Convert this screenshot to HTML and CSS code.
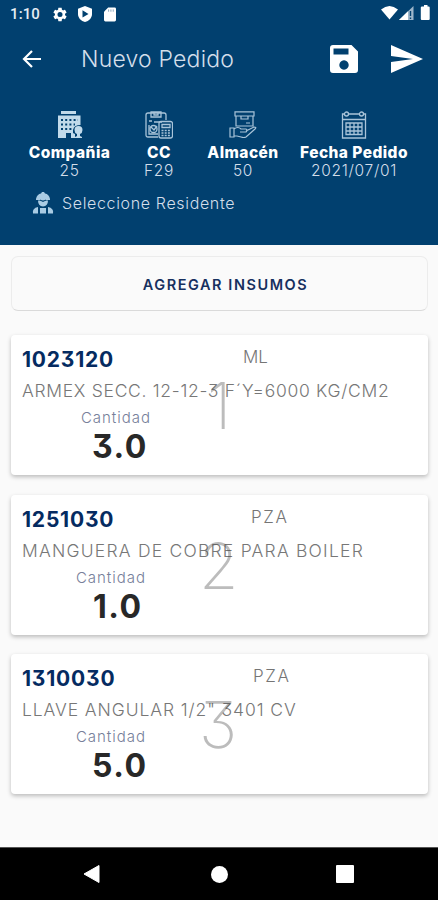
FILE: index.html
```html
<!DOCTYPE html>
<html lang="es">
<head>
<meta charset="utf-8">
<title>Nuevo Pedido</title>
<link rel="stylesheet" href="styles.css">
</head>
<body>
<header class="header">
  <div class="status">
    <span class="clock">1:10</span>
    <svg class="st-gear" width="14" height="15" viewBox="2 2 20 20" fill="#fff"><path d="M19.14 12.94c.04-.3.06-.61.06-.94s-.02-.64-.07-.94l2.03-1.58c.18-.14.23-.41.12-.61l-1.92-3.32c-.12-.22-.37-.29-.59-.22l-2.39.96c-.5-.38-1.03-.7-1.62-.94l-.36-2.54c-.04-.24-.24-.41-.48-.41h-3.84c-.24 0-.43.17-.47.41l-.36 2.54c-.59.24-1.13.57-1.62.94l-2.39-.96c-.22-.08-.47 0-.59.22L2.74 8.87c-.12.21-.08.47.12.61l2.03 1.58c-.05.3-.09.63-.09.94s.02.64.07.94l-2.03 1.58c-.18.14-.23.41-.12.61l1.92 3.32c.12.22.37.29.59.22l2.39-.96c.5.38 1.03.7 1.62.94l.36 2.54c.05.24.24.41.48.41h3.84c.24 0 .44-.17.47-.41l.36-2.54c.59-.24 1.13-.56 1.62-.94l2.39.96c.22.08.47 0 .59-.22l1.92-3.32c.12-.22.07-.47-.12-.61l-2.01-1.58zM12 15.6a3.6 3.6 0 1 1 0-7.2 3.6 3.6 0 0 1 0 7.2z"/></svg>
    <svg class="st-shield" width="14" height="16" viewBox="0 0 14 16"><path fill="#fff" d="M7 0l7 2.800V8c0 4-3 7-7 8-4-1-7-4-7-8V2.800z"/><path fill="#01406f" d="M4.500 4.300l6 3.600-6 3.600z"/></svg>
    <svg class="st-sd" width="12" height="15" viewBox="0 0 13 15"><path fill="#fff" d="M4.500 0H11.500Q13 0 13 1.500V13.500Q13 15 11.500 15H1.500Q0 15 0 13.500V4.500z"/><path stroke="#01406f" d="M5 2v2.500M7.500 2v2.500M10 2v2.500" stroke-width=".5"/></svg>
    <svg class="st-right" width="52" height="18" viewBox="0 0 52 18"><path fill="#fff" d="M2 4.500Q10.500-2.500 19 4.500L10.500 14.500z"/><path fill="#9db6cb" d="M34.500 1v14H20z"/><path fill="#fff" d="M29 6.300V15H20z"/><path d="M31.500 6v5M31.500 12.500v1.500" stroke="#01406f" stroke-width="1.400"/><path fill="#fff" d="M43.500 1.500h1.500V0h3.500v1.500h1.200q1 0 1 1V14q0 1-1 1h-6.900q-1 0-1-1V2.500q0-1 1.200-1z"/></svg>
  </div>
  <div class="bar">
    <svg class="back" width="20" height="18" viewBox="0 0 20 18" fill="none" stroke="#fff" stroke-width="2.200"><path d="M19 9H2M10 1L2 9l8 8"/></svg>
    <h1 class="title">Nuevo Pedido</h1>
    <svg class="save" width="28" height="28" viewBox="0 0 28 28"><path fill="#fff" fill-rule="evenodd" d="M3 0H21.500L28 6.500V25Q28 28 25 28H3Q0 28 0 25V3Q0 0 3 0zM3.500 3.500V9.500H18.500V3.500zM14 15.300a4.700 4.700 0 1 0 .01 0z"/></svg>
    <svg class="send" width="32" height="28" viewBox="0 0 32 28"><path fill="#fff" d="M0 0L32 14 0 28V17L22 14 0 11z"/></svg>
  </div>
  <div class="facts">
    <div class="fact company">
      <svg width="28" height="28" viewBox="0 0 28 28"><g fill="#c1daea"><path d="M5 0H20V3H5zM2 4.500H24.500V14Q18 14 17 19v3l2 1v4H15V22H10V27H2z"/><path d="M22.500 15q4 0 4 4 0 3-2.500 4v2l2 1v1h-7v-1l2-1v-2q-2.500-1-2.500-4 0-4 4-4z"/></g><path stroke="#01406f" stroke-width="2" stroke-dasharray="2 2.200" d="M5 9h17M5 13.500h14M5 18h11"/></svg>
      <b>Compañia</b><span>25</span>
    </div>
    <div class="fact cc">
      <svg width="28" height="28" viewBox="0 0 28 28" fill="none" stroke="#a9c4d9" stroke-width="1.300"><path d="M13 26H3Q1 26 1 24V4Q1 2 3 2H19Q21 2 21 4V9M6 1V6H16V1zM9 1v3h4V1M4 10h3M9 11h8M4 14v9h9"/><circle cx="8.500" cy="18" r="3.500"/><path d="M6 16l3 3 3-4"/><rect x="14" y="10.500" width="13.500" height="16.500" rx="2"/><path d="M17 13.500h8v3h-8z"/><path d="M16.500 19.500h9M16.500 22h9M16.500 24.500h9" stroke-dasharray="2 1.200" stroke-width="1.600"/></svg>
      <b>CC</b><span>F29</span>
    </div>
    <div class="fact store">
      <svg width="28" height="28" viewBox="0 0 28 28" fill="none" stroke="#a9c4d9" stroke-width="1.200"><path d="M6 .8H25V5H6zM7 5V15H24V5M12 5v3h7V5M17 12h4M1 17H5V26H1zM5 18q4-3 7 0h5q2 1 0 3h-6M17 20l8-4q3 0 1 2L17 26q-2 1-5 0l-4-1H5"/></svg>
      <b>Almacén</b><span>50</span>
    </div>
    <div class="fact date">
      <svg width="28" height="28" viewBox="0 0 28 28" fill="none" stroke="#a9c4d9" stroke-width="1.300"><path d="M2.500 3H25.500V27H2.500zM2.500 8.500H25.500"/><circle cx="6.500" cy="3" r="2" fill="#01406f"/><circle cx="21.500" cy="3" r="2" fill="#01406f"/><path d="M6 12H22V23.500H6zM6 16h16M6 20h16M10 12v11.500M14 12v11.500M18 12v11.500"/></svg>
      <b>Fecha Pedido</b><span>2021/07/01</span>
    </div>
  </div>
  <div class="resident">
    <svg width="22" height="22" viewBox="0 0 22 22" fill="#a9cbe3"><path d="M4 7Q5 2 9 1.500L10 0h2l1 1.500Q17 2 18 7v1H4zM6 8.500H16Q16 14 11 14.500 6 14 6 8.500zM1 21.500Q0 16 6 15v6.500zM8 16h6v5.500H8zM16 15q6 1 5 6.500H16z"/><path d="M8 8q3 3 6 0" fill="none" stroke="#01406f"/></svg>
    <span>Seleccione Residente</span>
  </div>
</header>
<main class="content">
  <button class="add"><span>AGREGAR INSUMOS</span></button>
  <article class="card first">
    <div class="top"><strong class="code">1023120</strong><span class="unit">ML</span></div>
    <p class="desc">ARMEX SECC. 12-12-3 F´Y=6000 KG/CM2</p>
    <div class="qty"><span class="lbl">Cantidad</span><strong class="num">3.0</strong></div>
    <span class="index">1</span>
  </article>
  <article class="card second">
    <div class="top"><strong class="code">1251030</strong><span class="unit">PZA</span></div>
    <p class="desc">MANGUERA DE COBRE PARA BOILER</p>
    <div class="qty"><span class="lbl">Cantidad</span><strong class="num">1.0</strong></div>
    <span class="index">2</span>
  </article>
  <article class="card third">
    <div class="top"><strong class="code">1310030</strong><span class="unit">PZA</span></div>
    <p class="desc">LLAVE ANGULAR 1/2" 3401 CV</p>
    <div class="qty"><span class="lbl">Cantidad</span><strong class="num">5.0</strong></div>
    <span class="index">3</span>
  </article>
</main>
<nav class="nav">
  <svg width="17" height="20" viewBox="0 0 17 20"><path fill="#fff" d="M16 1.500V18.500L1 10z" stroke="#fff" stroke-linejoin="round"/></svg>
  <span class="dot"></span>
  <span class="square"></span>
</nav>
</body>
</html>
```
FILE: styles.css
```css
* { box-sizing: border-box; }
body {
  margin: 0;
  width: 438px;
  height: 900px;
  overflow: hidden;
  display: flex;
  flex-direction: column;
  background: #fafafa;
  font-family: Inter, "Liberation Sans", sans-serif;
  font-weight: 300;
  font-feature-settings: "cv09" 1;
}
svg { display: block; flex: none; }
p, h1 { margin: 0; }

.header { height: 245px; background: #01406f; color: #d3deea; flex: none; }
.status { height: 28px; display: flex; align-items: center; padding-left: 10px; }
.clock { width: 43px; font: 500 15px/28px Roboto, sans-serif; color: #e6edf4; letter-spacing: .1px; }
.st-shield { margin-left: 11px; }
.st-sd { margin-left: 12px; }
.st-right { margin-left: auto; margin-right: 7px; width: 52px; }

.bar { height: 62px; display: flex; align-items: center; padding: 0 15px 0 22px; }
.title { margin-left: 39px; font-size: 23px; font-weight: 300; letter-spacing: .2px; flex: 1; white-space: nowrap; }
.save { margin-right: 1px; }
.send { margin-left: 32px; }

.facts { margin-top: 21px; height: 71px; display: flex; }
.fact { display: flex; flex-direction: column; align-items: center; white-space: nowrap; }
.fact b { margin-top: 5px; color: #fff; font-size: 15.500px; line-height: 18px; font-weight: 800; letter-spacing: .45px; }
.fact span { font-size: 15.500px; line-height: 17px; letter-spacing: .7px; }
.company { width: 81px; margin-left: 29px; }
.cc { width: 58px; margin-left: 20px; }
.store { width: 70px; margin-left: 20px; }
.date { width: 110px; margin-left: 21px; }

.resident { margin-top: 10px; display: flex; align-items: center; padding-left: 32px; height: 22px; }
.resident span { margin-left: 8px; font-size: 16px; letter-spacing: .65px; }

.content { flex: 1; padding: 11px 10px 0 11px; }
.add {
  display: block;
  width: 417px;
  height: 55px;
  border: 1px solid #ececec;
  border-bottom-color: #dadada;
  border-radius: 7px;
  background: #fafafa;
  padding: 1px 0 0 12px;
  color: #17305f;
  font: 600 14.500px Inter, sans-serif;
  letter-spacing: 1.550px;
}
.card {
  position: relative;
  height: 140px;
  margin-top: 19.500px;
  padding: 11px 11px 0;
  border-radius: 4px;
  background: #fff;
  box-shadow: 0 2px 4px rgba(0, 0, 0, .25);
}
.card.first { margin-top: 24px; }
.top { display: flex; height: 30px; }
.code { width: 221px; color: #052b61; font-size: 21px; line-height: 28px; font-weight: 700; letter-spacing: .8px; }
.unit { font-size: 17px; line-height: 22px; color: #757575; }
.desc { font-size: 17.500px; line-height: 29px; height: 30px; color: #777; white-space: nowrap; letter-spacing: .7px; }
.qty { width: 200px; }
.lbl { display: block; margin-left: 59px; font-size: 15px; line-height: 24px; color: #76809a; letter-spacing: .95px; }
.num { display: block; margin-left: 70px; font-size: 32px; line-height: 34px; color: #282828; font-weight: 700; letter-spacing: 1.500px; }
.index { position: absolute; left: 196px; top: 31px; font-size: 64px; line-height: 80px; font-weight: 200; color: rgba(80, 80, 80, .38); }
.second .lbl, .third .lbl { margin-left: 54px; }
.second .unit { margin-left: 8px; letter-spacing: 1.600px; }
.third .unit { margin-left: 10px; letter-spacing: 1.600px; }
.second .desc { letter-spacing: 1.220px; }
.third .desc { letter-spacing: .9px; }
.second .num { margin-left: 71px; }
.second .index, .third .index { left: 188px; }

.nav { height: 53px; flex: none; background: #000; display: flex; align-items: center; padding-left: 83px; border-top: 1px solid #555; }
.dot { width: 17px; height: 17px; margin-left: 111px; border-radius: 50%; background: #fff; }
.square { width: 18px; height: 18px; margin-left: 108px; border-radius: 1px; background: #fff; }
```
